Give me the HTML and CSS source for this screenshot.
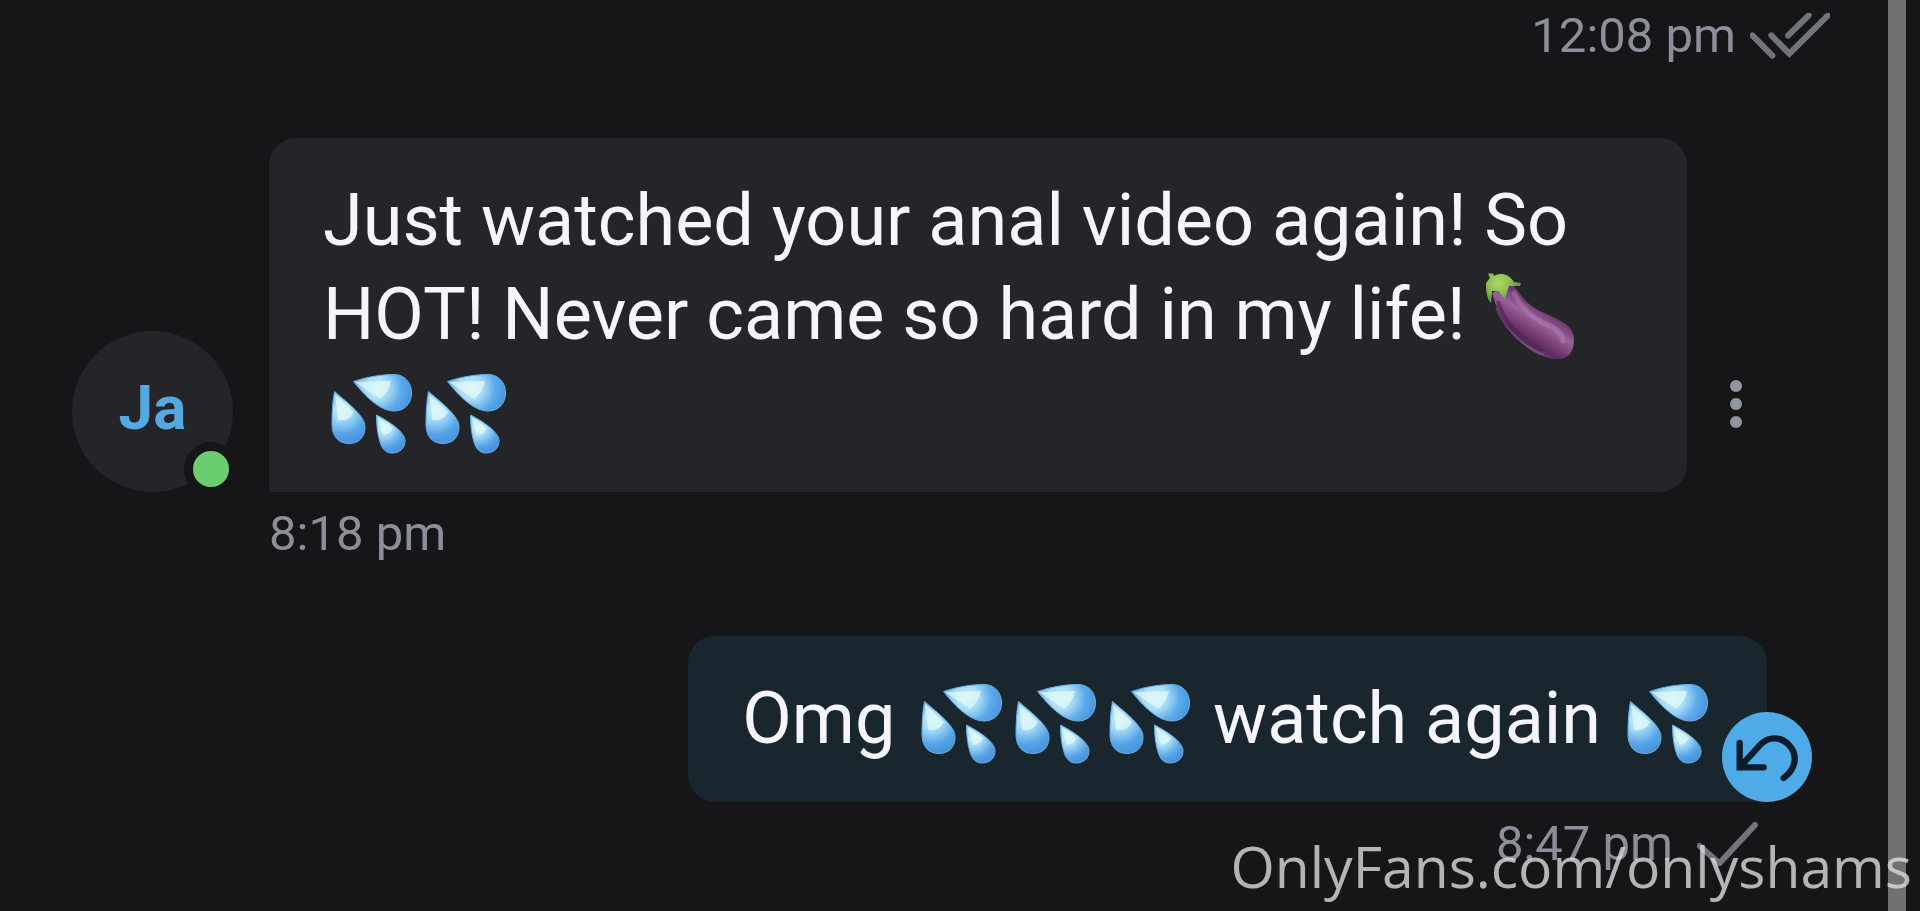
FILE: index.html
```html
<!DOCTYPE html>
<html lang="en">
<head>
<meta charset="utf-8">
<meta name="viewport" content="width=device-width, initial-scale=1">
<title>Messages</title>
<link rel="stylesheet" href="styles.css">
</head>
<body>
<svg class="defs" width="0" height="0" aria-hidden="true">
  <defs>
    <radialGradient id="dropBig" gradientUnits="userSpaceOnUse" cx="54" cy="26" r="36">
      <stop offset="0" stop-color="#d0f3fa"/><stop offset=".35" stop-color="#a5daf6"/><stop offset=".68" stop-color="#5caaea"/><stop offset="1" stop-color="#4893dc"/>
    </radialGradient>
    <radialGradient id="dropLeft" gradientUnits="userSpaceOnUse" cx="19" cy="48" r="34">
      <stop offset="0" stop-color="#d0f3fa"/><stop offset=".35" stop-color="#9dd4f5"/><stop offset=".72" stop-color="#55a3e8"/><stop offset="1" stop-color="#4893dc"/>
    </radialGradient>
    <radialGradient id="dropSmall" gradientUnits="userSpaceOnUse" cx="61" cy="65" r="27">
      <stop offset="0" stop-color="#d0f3fa"/><stop offset=".35" stop-color="#a5daf6"/><stop offset=".75" stop-color="#55a3e8"/><stop offset="1" stop-color="#4893dc"/>
    </radialGradient>
    <linearGradient id="eggSkin" gradientUnits="userSpaceOnUse" x1="60" y1="42" x2="38" y2="76">
      <stop offset="0" stop-color="#6d3a70"/><stop offset=".3" stop-color="#99629a"/><stop offset=".55" stop-color="#7d4479"/><stop offset=".8" stop-color="#5c2b60"/><stop offset="1" stop-color="#70466f"/>
    </linearGradient>
    <radialGradient id="eggCap" gradientUnits="userSpaceOnUse" cx="16" cy="15" r="18">
      <stop offset="0" stop-color="#a9dc62"/><stop offset=".65" stop-color="#8cbb50"/><stop offset="1" stop-color="#719548"/>
    </radialGradient>
    <symbol id="drops" viewBox="0 0 94 94">
      <g stroke="#67b0e6" stroke-width="1">
        <path fill="url(#dropBig)" d="M30.500 19.500C44 15 58 12.500 71 12.500C81 12.500 88.500 20 88.500 31C88.500 42 81 49 71 49C57 49 43 35 30.500 19.500Z"/>
        <path fill="url(#dropLeft)" d="M11.500 29.500C9.500 40 9 51 9 62C9 74 15 81.500 26 81.500C36 81.500 42 75 42 65C42 54 26 42 11.500 29.500Z"/>
        <path fill="url(#dropSmall)" d="M53.500 53C53.500 63 54.500 72 57 80C59 87 63 91 69 91C77 91 82 86 82 79C82 70 67 60 53.500 53Z"/>
      </g>
      <g fill="#e2fafa" opacity=".75">
        <path d="M32 20L68 19Q66 30 57 37Z"/>
        <path d="M12 32L15 58Q26 60 31 50Z"/>
        <path d="M54.500 55L60 73Q67 73 70 66Z"/>
      </g>
    </symbol>
    <symbol id="eggplant" viewBox="0 0 94 94">
      <path fill="url(#eggSkin)" d="M9 25L27 15C34 20 38 29 45 35C54 43 62 45 71 49.500C83 55 91 61 91 71C91 84 86 91 74 91C61 91 46 83 34 71C23 60 16 49 9 25Z"/>
      <path fill="none" stroke="#bd8abb" stroke-width="5" stroke-linecap="round" opacity=".42" d="M31 25C38 39 47 48 59 54C71 59 79 64 80 73"/>
      <path fill="none" stroke="#451d4c" stroke-width="4" opacity=".5" d="M15 33C21 54 38 73 60 83"/>
      <path fill="none" stroke="#91628f" stroke-width="1" opacity=".7" d="M13 40C21 61 38 78 61 87"/>
      <path fill="url(#eggCap)" d="M5 5.500L10 5.500L11 8C18 4 26 6 31 14L38 15L37 18L26 18L22 31L15 23L9 23L8 35C4 31 3 24 3 15L7 10Z"/>
    </symbol>
  </defs>
</svg>

<div class="app">
  <main class="chat">
    <div class="meta meta-read">
      <time>12:08 pm</time>
      <svg class="read-icon" viewBox="750 42 240 138" role="img" aria-label="Read">
        <path d="M757 109L817 170M864 110L926 49M814 109L868 164L984 49"/>
      </svg>
    </div>

    <article class="incoming">
      <div class="avatar">Ja<span class="online"></span></div>
      <p class="bubble bubble-in">Just watched your anal video again! So HOT! Never came so hard in my life! <svg class="emoji" role="img" aria-label="Eggplant"><use href="#eggplant"/></svg> <span class="together"><svg class="emoji" role="img" aria-label="Sweat droplets"><use href="#drops"/></svg><svg class="emoji" role="img" aria-label="Sweat droplets"><use href="#drops"/></svg></span></p>
      <button class="menu" type="button" aria-label="Message options">
        <svg viewBox="0 0 12 48" aria-hidden="true"><circle cx="6" cy="6" r="6"/><circle cx="6" cy="24" r="6"/><circle cx="6" cy="42" r="6"/></svg>
      </button>
      <div class="meta meta-in"><time>8:18 pm</time></div>
    </article>

    <article class="outgoing">
      <div class="sent">
        <p class="bubble bubble-out">Omg <span class="together"><svg class="emoji" role="img" aria-label="Sweat droplets"><use href="#drops"/></svg><svg class="emoji" role="img" aria-label="Sweat droplets"><use href="#drops"/></svg><svg class="emoji" role="img" aria-label="Sweat droplets"><use href="#drops"/></svg></span> watch again <svg class="emoji" role="img" aria-label="Sweat droplets"><use href="#drops"/></svg></p>
        <button class="undo" type="button" aria-label="Unsend message">
          <svg viewBox="0 0 270 270" aria-hidden="true"><path stroke-linejoin="miter" d="M53 93V166H125M53 166L115 98C139 73 177 73 200 98C229 127 223 170 185 198"/></svg>
        </button>
      </div>
      <div class="meta meta-out">
        <time>8:47 pm</time>
        <svg class="sent-icon" viewBox="350 542 183 132" role="img" aria-label="Sent"><path d="M358 614L417 666L524 551"/></svg>
      </div>
    </article>
  </main>
  <div class="scrollbar" aria-hidden="true"></div>
  <div class="watermark">OnlyFans.com/onlyshams</div>
</div>
</body>
</html>
```

FILE: styles.css
```css
* {
  box-sizing: border-box;
}

body {
  margin: 0;
  background: #161618;
  color: #f5f5fa;
  font-family: Roboto, "Liberation Sans", sans-serif;
}

.defs {
  position: absolute;
}

.app {
  position: relative;
  display: flex;
  min-height: 100vh;
  overflow: hidden;
  padding-right: 14px;
}

.chat {
  flex: 1;
  display: flex;
  flex-direction: column;
  gap: 72px;
  padding: 6px 58px 0 72px;
}

.scrollbar {
  width: 18px;
  background: #717171;
}

.meta {
  display: flex;
  align-items: center;
  color: #8a8f99;
  font-size: 49px;
  line-height: 60px;
}

.meta-read {
  justify-content: flex-end;
  gap: 14px;
}

.read-icon,
.sent-icon {
  fill: none;
  stroke: #70747d;
  stroke-width: 18;
  stroke-linecap: round;
}

.read-icon {
  width: 80px;
  height: 46px;
}

.incoming {
  display: grid;
  grid-template-columns: 197px 1fr 98px;
  row-gap: 12px;
  align-items: end;
  padding-right: 45px;
}

.avatar {
  position: relative;
  display: flex;
  align-items: center;
  justify-content: center;
  width: 161px;
  height: 161px;
  padding-bottom: 8px;
  border-radius: 50%;
  background: #242529;
  color: #54a9e3;
  font-size: 62px;
  font-weight: 700;
}

.online {
  position: absolute;
  right: -5px;
  bottom: -4px;
  width: 54px;
  height: 54px;
  border: 9px solid #161618;
  border-radius: 50%;
  background: #6acd70;
}

.bubble {
  margin: 0;
  padding: 36px 54px;
  font-size: 72px;
  line-height: 94px;
}

.bubble-in {
  border-radius: 27px 27px 27px 0;
  background: #242529;
}

.bubble-out {
  border-radius: 27px 27px 0 27px;
  background: #1a262e;
}

.emoji {
  width: 94px;
  height: 94px;
  vertical-align: top;
}

.together {
  white-space: nowrap;
}

.menu {
  display: flex;
  justify-content: center;
  padding: 0 0 64px;
  border: 0;
  background: none;
}

.menu svg {
  width: 12px;
  height: 48px;
  fill: #8f95a1;
}

.meta-in {
  grid-column: 2;
}

.outgoing {
  display: flex;
  flex-direction: column;
  align-items: flex-end;
  gap: 12px;
  padding-right: 63px;
}

.sent {
  position: relative;
}

.undo {
  position: absolute;
  right: -45px;
  bottom: 0;
  width: 90px;
  height: 90px;
  padding: 0;
  border: 0;
  border-radius: 50%;
  background: #4faae8;
}

.undo svg {
  display: block;
  fill: none;
  stroke: #0c1c2c;
  stroke-width: 19;
  stroke-linecap: round;
}

.meta-out {
  gap: 24px;
  padding-right: 9px;
}

.sent-icon {
  width: 61px;
  height: 44px;
}

.watermark {
  position: absolute;
  right: 8px;
  bottom: 5px;
  color: rgb(220 220 220 / 80%);
  font-family: "Open Sans", "Noto Sans", sans-serif;
  font-size: 57px;
  font-weight: 400;
  line-height: 80px;
}
```
